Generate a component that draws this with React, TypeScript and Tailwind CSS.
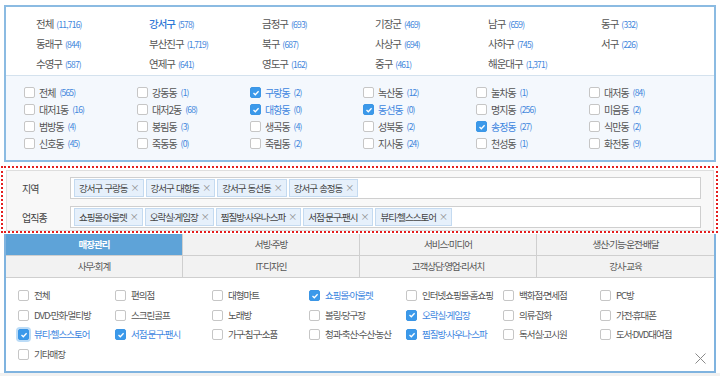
const districts: [string, string, boolean?][] = [
  ["전체", "11,716"],
  ["강서구", "578", true],
  ["금정구", "693"],
  ["기장군", "469"],
  ["남구", "659"],
  ["동구", "332"],
  ["동래구", "844"],
  ["부산진구", "1,719"],
  ["북구", "687"],
  ["사상구", "694"],
  ["사하구", "745"],
  ["서구", "226"],
  ["수영구", "587"],
  ["연제구", "641"],
  ["영도구", "162"],
  ["중구", "461"],
  ["해운대구", "1,371"],
];

const dongs: [string, string, boolean?][] = [
  ["전체", "565"],
  ["강동동", "1"],
  ["구랑동", "2", true],
  ["녹산동", "12"],
  ["눌차동", "1"],
  ["대저동", "84"],
  ["대저1동", "16"],
  ["대저2동", "68"],
  ["대항동", "0", true],
  ["동선동", "0", true],
  ["명지동", "256"],
  ["미음동", "2"],
  ["범방동", "4"],
  ["봉림동", "3"],
  ["생곡동", "4"],
  ["성북동", "2"],
  ["송정동", "27", true],
  ["식만동", "2"],
  ["신호동", "45"],
  ["죽동동", "0"],
  ["죽림동", "2"],
  ["지사동", "24"],
  ["천성동", "1"],
  ["화전동", "9"],
];

const areaTags = ["강서구 구랑동", "강서구 대항동", "강서구 동선동", "강서구 송정동"];
const jobTags = ["쇼핑몰·아울렛", "오락실·게임장", "찜질방·사우나·스파", "서점·문구·팬시", "뷰티·헬스스토어"];

const tabs = ["매장관리", "서빙·주방", "서비스·미디어", "생산·기능·운전·배달", "사무·회계", "IT·디자인", "고객상담·영업·리서치", "강사·교육"];

const jobs: [string, boolean?][] = [
  ["전체"],
  ["편의점"],
  ["대형마트"],
  ["쇼핑몰·아울렛", true],
  ["인터넷쇼핑몰·홈쇼핑"],
  ["백화점·면세점"],
  ["PC방"],
  ["DVD·만화·멀티방"],
  ["스크린골프"],
  ["노래방"],
  ["볼링·당구장"],
  ["오락실·게임장", true],
  ["의류·잡화"],
  ["가전·휴대폰"],
  ["뷰티·헬스스토어", true],
  ["서점·문구·팬시", true],
  ["가구·침구·소품"],
  ["청과·축산·수산·농산"],
  ["찜질방·사우나·스파", true],
  ["독서실·고시원"],
  ["도서·DVD대여점"],
  ["기타매장"],
];

// the middle dot is narrow in the original font
function Dotted({ text }: { text: string }) {
  const parts = text.split("·");
  return (
    <>
      {parts.map((p, i) => (
        <span key={i}>
          {i > 0 && <span className="mx-[-1.5px]">·</span>}
          {p}
        </span>
      ))}
    </>
  );
}

function Box({ checked, ring }: { checked?: boolean; ring?: boolean }) {
  return (
    <span
      className={
        "flex h-[11px] w-[11px] shrink-0 items-center justify-center rounded-[2px] border " +
        (checked ? "border-[#3b96e6] bg-[#3b99ea]" : "border-[#c6c6c6] bg-white") +
        (ring ? " shadow-[0_0_0_2px_#bcdcf7]" : "")
      }
    >
      {checked && (
        <svg width="8" height="8" viewBox="0 0 8 8">
          <polyline points="1.5,4 3.3,5.8 6.6,2.2" fill="none" stroke="white" strokeWidth="1.3" />
        </svg>
      )}
    </span>
  );
}

function Tag({ label }: { label: string }) {
  return (
    <span className="flex h-[18px] items-center gap-[3px] whitespace-nowrap border border-[#c4daf0] bg-[#e6f0fb] px-[4px] text-[9.5px] tracking-[-1px] text-[#444] [word-spacing:1px]">
      <span>
        <Dotted text={label} />
      </span>
      <span className="text-[9px] text-[#8a8a8a]">×</span>
    </span>
  );
}

export default function App() {
  return (
    <div className="relative h-[376px] w-[720px] overflow-hidden bg-white font-['Noto_Sans_CJK_KR',sans-serif] text-[#555]">
      {/* district picker */}
      <div className="ml-[4px] mt-[5px] w-[712px] border-2 border-[#8bbbe2]">
        <div className="grid h-[68px] grid-cols-[repeat(6,113px)] pl-[30px] pt-[8px] leading-[17px]">
          {districts.map(([name, count, on]) => (
            <div key={name} className="flex items-baseline gap-[3px] whitespace-nowrap">
              <span className={"text-[10.5px] tracking-[-1px] " + (on ? "font-medium text-[#2f78d6]" : "text-[#555]")}>{name}</span>
              <span className="text-[8.5px] tracking-[-0.8px] text-[#3f86dc]">({count})</span>
            </div>
          ))}
        </div>
        <div className="grid h-[85px] grid-cols-[repeat(6,113px)] content-start border-t border-[#d4e2ee] bg-[#f4f8fd] pl-[18px] pt-[8px] leading-[17px]">
          {dongs.map(([name, count, on]) => (
            <div key={name} className="flex items-center gap-[4px] whitespace-nowrap">
              <Box checked={on} />
              <span className={"text-[10px] tracking-[-1px] " + (on ? "text-[#3d86df]" : "text-[#555]")}>{name}</span>
              <span className="text-[8.5px] tracking-[-0.8px] text-[#3f86dc]">({count})</span>
            </div>
          ))}
        </div>
      </div>

      {/* selected conditions */}
      <div className="ml-[1px] mt-[4px] w-[717px] border-2 border-dotted border-[#e41e1e] pl-[3px] pr-[2px] pt-[2px]">
        <div className="flex h-[61px] flex-col gap-[7px] border border-[#dedede] bg-[#f8f8f8] pl-[15px] pt-[6px]">
          {[
            ["지역", areaTags],
            ["업직종", jobTags],
          ].map(([label, list]) => (
            <div key={label as string} className="flex items-center">
              <span className="w-[48px] text-[10px] tracking-[-1px] text-[#444]">{label as string}</span>
              <div className="flex h-[22px] w-[631px] items-center gap-[2px] border border-[#cfcfcf] bg-white px-[3px]">
                {(list as string[]).map((t) => (
                  <Tag key={t} label={t} />
                ))}
              </div>
            </div>
          ))}
        </div>
      </div>

      {/* job category */}
      <div className="relative ml-[4px] mt-[1px] h-[139px] w-[712px] border-2 border-t-0 border-[#7fb3df]">
        <div className="grid grid-cols-4">
          {tabs.map((t, i) => (
            <div
              key={t}
              className={
                "flex h-[22px] items-center justify-center border-b border-[#cfcfcf] text-[9.5px] tracking-[-1px] " +
                (i % 4 !== 3 ? "border-r " : "") +
                (i === 0 ? "bg-[#5ea3d8] font-bold text-white" : "bg-[#f2f2f2] text-[#555]")
              }
            >
              <span>
                <Dotted text={t} />
              </span>
            </div>
          ))}
        </div>
        <div className="grid grid-cols-[repeat(7,97px)] pl-[12px] pt-[8px] leading-[19.5px]">
          {jobs.map(([name, on]) => (
            <div key={name} className="flex items-center gap-[5px] whitespace-nowrap">
              <Box checked={on} ring={name === "뷰티·헬스스토어"} />
              <span className={"text-[9.5px] tracking-[-1px] " + (on ? "text-[#3d86df]" : "text-[#555]")}>
                <Dotted text={name} />
              </span>
            </div>
          ))}
        </div>
        <svg className="absolute bottom-[7px] right-[8px]" width="11" height="11" viewBox="0 0 11 11">
          <path d="M0.5 0.5 L10.5 10.5 M10.5 0.5 L0.5 10.5" stroke="#8a8a8a" strokeWidth="1" />
        </svg>
      </div>
      <div className="h-[10px] bg-[#f1f1f1]" />
    </div>
  );
}
